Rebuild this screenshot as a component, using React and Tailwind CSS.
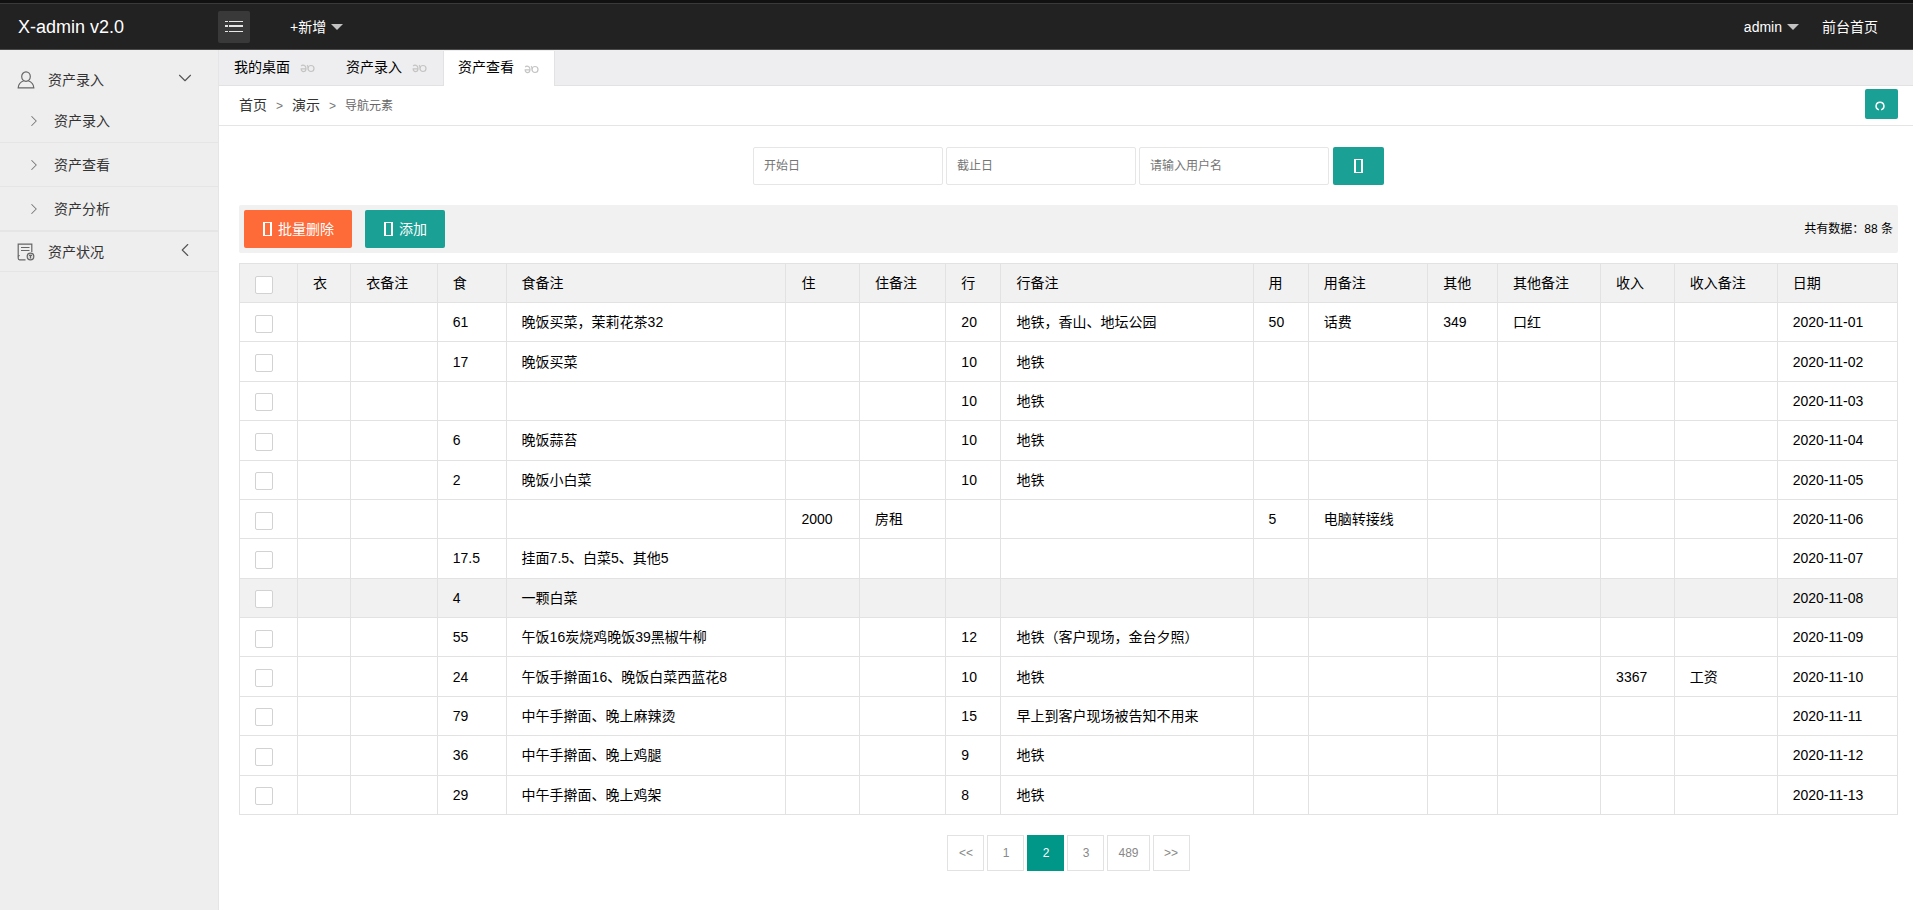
import React from 'react';
import { ChevronDown, ChevronLeft, ChevronRight } from 'lucide-react';

const columns = [
  '衣', '衣备注', '食', '食备注', '住', '住备注', '行', '行备注',
  '用', '用备注', '其他', '其他备注', '收入', '收入备注', '日期',
];

// keyed by column name, empty cells are left out
const rows = [
  { 食: '61', 食备注: '晚饭买菜，茉莉花茶32', 行: '20', 行备注: '地铁，香山、地坛公园', 用: '50', 用备注: '话费', 其他: '349', 其他备注: '口红', 日期: '2020-11-01' },
  { 食: '17', 食备注: '晚饭买菜', 行: '10', 行备注: '地铁', 日期: '2020-11-02' },
  { 行: '10', 行备注: '地铁', 日期: '2020-11-03' },
  { 食: '6', 食备注: '晚饭蒜苔', 行: '10', 行备注: '地铁', 日期: '2020-11-04' },
  { 食: '2', 食备注: '晚饭小白菜', 行: '10', 行备注: '地铁', 日期: '2020-11-05' },
  { 住: '2000', 住备注: '房租', 用: '5', 用备注: '电脑转接线', 日期: '2020-11-06' },
  { 食: '17.5', 食备注: '挂面7.5、白菜5、其他5', 日期: '2020-11-07' },
  { 食: '4', 食备注: '一颗白菜', 日期: '2020-11-08', active: true },
  { 食: '55', 食备注: '午饭16炭烧鸡晚饭39黑椒牛柳', 行: '12', 行备注: '地铁（客户现场，金台夕照）', 日期: '2020-11-09' },
  { 食: '24', 食备注: '午饭手擀面16、晚饭白菜西蓝花8', 行: '10', 行备注: '地铁', 收入: '3367', 收入备注: '工资', 日期: '2020-11-10' },
  { 食: '79', 食备注: '中午手擀面、晚上麻辣烫', 行: '15', 行备注: '早上到客户现场被告知不用来', 日期: '2020-11-11' },
  { 食: '36', 食备注: '中午手擀面、晚上鸡腿', 行: '9', 行备注: '地铁', 日期: '2020-11-12' },
  { 食: '29', 食备注: '中午手擀面、晚上鸡架', 行: '8', 行备注: '地铁', 日期: '2020-11-13' },
];

const tabs = ['我的桌面', '资产录入', '资产查看'];
const subMenu = ['资产录入', '资产查看', '资产分析'];
const pages = ['<<', '1', '2', '3', '489', '>>'];

const Caret = () => (
  <svg width="12" height="6" viewBox="0 0 12 6" className="text-[#c2c2c2]">
    <path d="M0 0h12L6 6z" fill="currentColor" />
  </svg>
);

const MenuIcon = () => (
  <svg width="18" height="11" viewBox="0 0 18 11" fill="#e6e6e6" shapeRendering="crispEdges">
    <path d="M0 0h3v1H0zM4 0h14v1H4zM0 4h3v2H0zM4 4h14v2H4zM0 10h3v1H0zM4 10h14v1H4z" />
  </svg>
);

const UserIcon = () => (
  <svg width="18" height="18" viewBox="0 0 18 18" fill="none" stroke="#666" strokeWidth="1.2">
    <ellipse cx="9" cy="5.6" rx="4.3" ry="4.7" />
    <path d="M6.8 9.8C3.4 11 1.4 13.4 1.2 16.8h15.6c-.2-3.4-2.2-5.8-5.6-7" />
  </svg>
);

const RecordIcon = () => (
  <svg width="18" height="18" viewBox="0 0 18 18" fill="none" stroke="#666" strokeWidth="1.2">
    <path d="M8.500 16.800H2.600A1.500 1.500 0 0 1 1.200 15.300V1.200h13.600V9" />
    <path d="M4 4.500h8.500M4 7.500h8.500M1.200 13.500c.2-.8.800-1 1.500-1" />
    <circle cx="13.500" cy="13.500" r="3.300" fill="#ddd" />
    <path d="M12 12.300h3M13.500 12.300v3.200" />
  </svg>
);

// tab close mark
const TabMark = () => (
  <svg width="15" height="9" viewBox="0 0 15 9" fill="none" stroke="#c4c4c4" strokeWidth="1.2">
    <path d="M1.200 2C2.400.6 6 .8 6 4.400C6 8.600 1 8.600 1.200 4.800H6" />
    <circle cx="11" cy="4.500" r="3" />
    <path d="M8.200 4.200C8.200 2.600 7.800 1.800 7 1.300" />
  </svg>
);

const RefreshIcon = () => (
  <svg width="10" height="10" viewBox="0 0 10 10" fill="none" stroke="#fff" strokeWidth="1.5">
    <path d="M3.900 8.900C-.4 7.400.4 1.200 5 1.200s5.400 6.200 1.100 7.700" />
  </svg>
);

const BoxIcon = () => (
  <svg width="12" height="14" viewBox="0 0 12 14" fill="#fff" fillRule="evenodd" shapeRendering="crispEdges">
    <path d="M1 0h9v14H1zM3 1v12h5V1z" />
  </svg>
);

const Checkbox = ({ label }) => (
  <input
    type="checkbox"
    aria-label={label}
    className="mt-[3px] block size-[18px] appearance-none rounded-xs border border-[#d2d2d2] bg-white checked:bg-[#5fb878]"
  />
);

const Header = () => (
  <header className="border-t-3 border-b border-t-[#111] border-b-[#4a4a4a] bg-[#222] text-sm text-white">
    <div className="flex h-[46px] items-center border-t border-[#3a3a3a]">
      <a href="#" className="w-[218px] pl-[18px] text-lg">X-admin v2.0</a>
      <button type="button" aria-label="菜单" className="flex size-8 items-center justify-center rounded-xs bg-[#393939]">
        <MenuIcon />
      </button>
      <button type="button" className="ml-10 flex items-center gap-[5px]">
        +新增 <Caret />
      </button>
      <div className="ml-auto flex items-center gap-[23px] pr-[35px]">
        <button type="button" className="flex items-center gap-[5px]">
          admin <Caret />
        </button>
        <a href="#">前台首页</a>
      </div>
    </div>
  </header>
);

const Sidebar = () => (
  <nav className="w-[219px] shrink-0 border-r border-[#e5e5e5] bg-[#eee] pt-[10px] text-sm text-[#333]">
    <a href="#" className="flex h-[39px] items-center pl-[17px] pr-[22px]">
      <UserIcon />
      <span className="ml-[13px] flex-1">资产录入</span>
      <ChevronDown size={22} strokeWidth={1.2} className="mb-1 text-[#555]" />
    </a>
    <ul className="border-b border-[#e5e5e5]">
      {subMenu.map((name) => (
        <li key={name}>
          <a href="#" className="flex h-11 items-center gap-[11px] border-b border-[#e5e5e5] pl-[25px]">
            <ChevronRight size={18} strokeWidth={1.4} className="text-[#777]" />
            {name}
          </a>
        </li>
      ))}
    </ul>
    <a href="#" className="flex h-10 items-center border-b border-[#e5e5e5] pl-[17px] pr-[22px]">
      <RecordIcon />
      <span className="ml-[13px] flex-1">资产状况</span>
      <ChevronLeft size={22} strokeWidth={1.2} className="mb-1 text-[#555]" />
    </a>
  </nav>
);

const Tabs = () => (
  <div className="flex h-9 border-b border-[#e2e2e2] bg-[#eeeef0] text-sm text-black">
    {tabs.map((name, i) => (
      <button
        key={name}
        type="button"
        className={
          i === tabs.length - 1
            ? '-mb-px mt-px flex w-28 items-center gap-[10px] border-x border-[#e2e2e2] bg-white pb-[3px] pl-[14px]'
            : 'flex w-28 items-center gap-[10px] pb-[2px] pl-[15px]'
        }
      >
        {name}
        <span className="mt-1"><TabMark /></span>
      </button>
    ))}
  </div>
);

const Breadcrumb = () => (
  <div className="flex h-10 items-center border-b border-[#e5e5e5] pl-5 pr-[15px] text-[#333]">
    <div className="flex items-baseline gap-[9px] pb-[2px] text-sm">
      <a href="#">首页</a>
      <span className="text-xs text-[#777]">&gt;</span>
      <a href="#">演示</a>
      <span className="text-xs text-[#777]">&gt;</span>
      <cite className="text-xs not-italic text-[#666]">导航元素</cite>
    </div>
    <button
      type="button"
      aria-label="刷新"
      className="mb-1 ml-auto flex h-[30px] w-[33px] items-center justify-center rounded-xs bg-[#1aa094] pt-1 pr-[3px]"
    >
      <RefreshIcon />
    </button>
  </div>
);

const SearchForm = () => (
  <form className="flex items-center justify-center gap-1 pt-5 text-xs">
    <div className="flex gap-[3px]">
      {['开始日', '截止日', '请输入用户名'].map((label) => (
        <input
          key={label}
          type="text"
          aria-label={label}
          placeholder={label}
          className="h-[38px] w-[190px] rounded-xs border border-[#e6e6e6] bg-white px-[10px] placeholder:text-[#757575]"
        />
      ))}
    </div>
    <button
      type="button"
      aria-label="搜索"
      className="mt-px flex h-[38px] w-[51px] items-center justify-center rounded-xs bg-[#1aa094]"
    >
      <BoxIcon />
    </button>
  </form>
);

const Toolbar = () => (
  <div className="mt-5 flex h-12 items-center rounded-xs bg-[#f1f1f1] px-[5px] text-sm text-white">
    <button type="button" className="flex h-[38px] items-center gap-1 rounded-xs bg-[#ff6a39] px-[18px]">
      <BoxIcon /> 批量删除
    </button>
    <button type="button" className="ml-[13px] flex h-[38px] items-center gap-1 rounded-xs bg-[#1aa094] px-[18px]">
      <BoxIcon /> 添加
    </button>
    <span className="ml-auto text-xs text-black">共有数据：88 条</span>
  </div>
);

const AssetTable = () => (
  <table className="mt-[10px] h-[552px] w-full border-collapse whitespace-nowrap text-left text-sm text-black">
    <thead>
      <tr className="h-[39px] bg-[#f1f1f1]">
        <th className="border border-[#e2e2e2] px-[15px]"><Checkbox label="全选" /></th>
        {columns.map((name) => (
          <th key={name} className="border border-[#e2e2e2] px-[15px] font-normal">{name}</th>
        ))}
      </tr>
    </thead>
    <tbody>
      {rows.map((row) => (
        <tr key={row.日期} className={row.active ? 'bg-[#f1f1f1]' : 'bg-white'}>
          <td className="border border-[#e2e2e2] px-[15px]"><Checkbox label={row.日期} /></td>
          {columns.map((name) => (
            <td key={name} className="border border-[#e2e2e2] px-[15px]">{row[name]}</td>
          ))}
        </tr>
      ))}
    </tbody>
  </table>
);

const Pagination = () => (
  <div className="mt-5 flex justify-center gap-[3px] text-xs">
    {pages.map((page) => (
      <a
        key={page}
        href="#"
        className={
          page === '2'
            ? 'flex h-9 min-w-[37px] items-center justify-center bg-[#009688] px-[10px] text-white'
            : 'flex h-9 min-w-[37px] items-center justify-center border border-[#e2e2e2] px-[10px] text-[#888]'
        }
      >
        {page}
      </a>
    ))}
  </div>
);

const App = () => {
  return (
    <div className="flex min-h-screen flex-col bg-white font-['Liberation_Sans','Noto_Sans_CJK_SC',sans-serif]">
      <Header />
      <div className="flex flex-1">
        <Sidebar />
        <div className="min-w-0 flex-1">
          <Tabs />
          <Breadcrumb />
          <main className="pl-5 pr-[15px]">
            <SearchForm />
            <Toolbar />
            <AssetTable />
            <Pagination />
          </main>
        </div>
      </div>
    </div>
  );
};

export default App;
